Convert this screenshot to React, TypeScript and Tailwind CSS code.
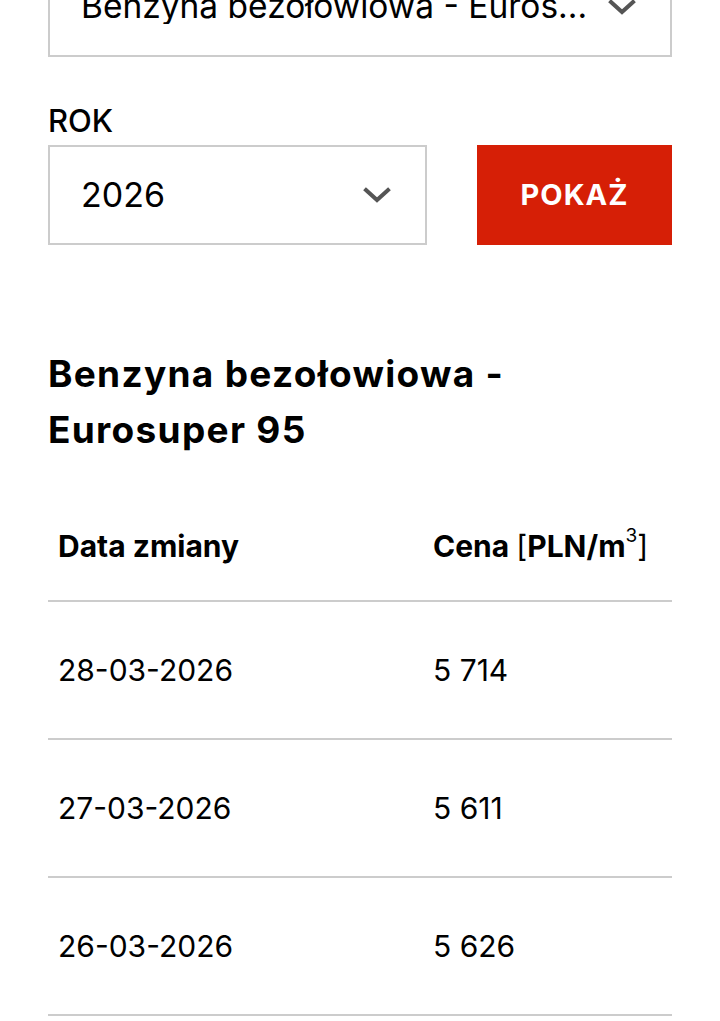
import React from "react";

const Chevron = () => (
  <svg width="28" height="16" viewBox="0 0 28 16" className="shrink-0">
    <polyline points="3,3 14,13 25,3" fill="none" stroke="#555555" strokeWidth="4" strokeLinecap="square" />
  </svg>
);

const rows = [
  ["28-03-2026", "5 714"],
  ["27-03-2026", "5 611"],
  ["26-03-2026", "5 626"],
];

export default function App() {
  return (
    <div
      className="w-[720px] h-[1021px] overflow-hidden bg-white text-black"
      style={{ fontFamily: "Inter, 'Noto Sans', sans-serif" }}
    >
      <div className="px-[48px]">
        <div className="mt-[-43px] h-[100px] border-2 border-[#cccccc] flex items-center pl-[31px] pr-[34px]">
          <span className="flex-1 text-[33.5px] leading-none whitespace-nowrap overflow-hidden">Benzyna bezołowiowa - Euros...</span>
          <Chevron />
        </div>

        <div className="mt-[48px] text-[31px] font-medium leading-none">ROK</div>

        <div className="mt-[9px] flex gap-[50px]">
          <div className="w-[379px] h-[100px] border-2 border-[#cccccc] flex items-center pl-[31px] pr-[34px]">
            <span className="flex-1 text-[34px] leading-none">2026</span>
            <Chevron />
          </div>
          <div className="flex-1 h-[100px] bg-[#d61f06] flex items-center justify-center text-white text-[29px] font-bold tracking-[1px]">
            POKAŻ
          </div>
        </div>

        <h2 className="mt-[101px] text-[37px] font-bold leading-[56px] tracking-[1.3px]">
          Benzyna bezołowiowa -<br />Eurosuper 95
        </h2>

        <div className="mt-[34px]">
          <div className="flex h-[110px] items-center border-b-2 border-[#cccccc] text-[30px] font-bold">
            <div className="w-[385px] pl-[10px]">Data zmiany</div>
            <div className="flex-1">
              Cena <span className="font-normal">[</span>PLN/m<sup className="font-normal text-[19px] top-[-0.75em]">3</sup><span className="font-normal">]</span>
            </div>
          </div>
          {rows.map(([d, p]) => (
            <div key={d} className="flex h-[138px] items-center border-b-2 border-[#cccccc] text-[30px]">
              <div className="w-[385px] pl-[10px]">{d}</div>
              <div className="flex-1">{p}</div>
            </div>
          ))}
        </div>
      </div>
    </div>
  );
}
